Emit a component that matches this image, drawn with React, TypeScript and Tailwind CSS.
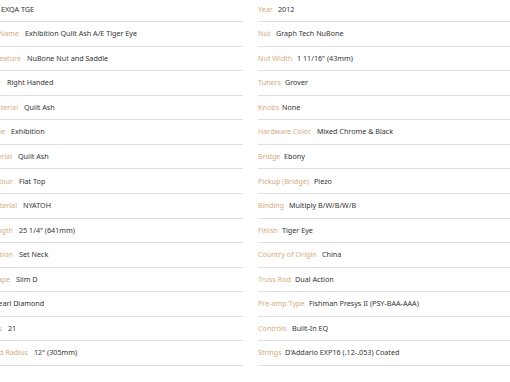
import React from "react";

type Row = { label: string; value: string; w: string };

const left: Row[] = [
  { label: "Model", value: "EXQA TGE", w: "w-[61px]" },
  { label: "Model Name", value: "Exhibition Quilt Ash A/E Tiger Eye", w: "w-[85px]" },
  { label: "Special Feature", value: "NuBone Nut and Saddle", w: "w-[87px]" },
  { label: "Player", value: "Right Handed", w: "w-[67px]" },
  { label: "Top Material", value: "Quilt Ash", w: "w-[84px]" },
  { label: "Body Shape", value: "Exhibition", w: "w-[71px]" },
  { label: "Back & Side Material", value: "Quilt Ash", w: "w-[78px]" },
  { label: "Body Contour", value: "Flat Top", w: "w-[79px]" },
  { label: "Neck Material", value: "NYATOH", w: "w-[83px]" },
  { label: "Scale Length", value: "25 1/4\" (641mm)", w: "w-[79px]" },
  { label: "Neck Construction", value: "Set Neck", w: "w-[79px]" },
  { label: "Neck Shape", value: "Slim D", w: "w-[76px]" },
  { label: "Inlay", value: "Pearl Diamond", w: "w-[54px]" },
  { label: "Frets", value: "21", w: "w-[68px]" },
  { label: "Fingerboard Radius", value: "12\" (305mm)", w: "w-[94px]" },
];

const right: Row[] = [
  { label: "Year", value: "2012", w: "w-[20px]" },
  { label: "Nut", value: "Graph Tech NuBone", w: "w-[18px]" },
  { label: "Nut Width", value: "1 11/16\" (43mm)", w: "w-[39px]" },
  { label: "Tuners", value: "Grover", w: "w-[27px]" },
  { label: "Knobs", value: "None", w: "w-[24px]" },
  { label: "Hardware Color", value: "Mixed Chrome & Black", w: "w-[59px]" },
  { label: "Bridge", value: "Ebony", w: "w-[26px]" },
  { label: "Pickup (Bridge)", value: "Piezo", w: "w-[56px]" },
  { label: "Binding", value: "Multiply B/W/B/W/B", w: "w-[31px]" },
  { label: "Finish", value: "Tiger Eye", w: "w-[24px]" },
  { label: "Country of Origin", value: "China", w: "w-[64px]" },
  { label: "Truss Rod", value: "Dual Action", w: "w-[37px]" },
  { label: "Pre-amp Type", value: "Fishman Presys II (PSY-BAA-AAA)", w: "w-[51px]" },
  { label: "Controls", value: "Built-In EQ", w: "w-[34px]" },
  { label: "Strings", value: "D'Addario EXP16 (.12-.053) Coated", w: "w-[27px]" },
];

function LeftRow({ r }: { r: Row }) {
  return (
    <div className="flex h-[24.57px] items-center border-b border-[#e0e0e0] whitespace-nowrap">
      <div className={`${r.w} shrink-0 flex justify-end pr-[6px] text-[#d6ab80]`}>
        <span>{r.label}</span>
      </div>
      <span className="text-[#333333]">{r.value}</span>
    </div>
  );
}

function RightRow({ r }: { r: Row }) {
  return (
    <div className="flex h-[24.57px] items-center border-b border-[#e0e0e0] whitespace-nowrap">
      <div className={`${r.w} shrink-0 text-[#d6ab80]`}>
        <span>{r.label}</span>
      </div>
      <span className="text-[#333333]">{r.value}</span>
    </div>
  );
}

export default function App() {
  return (
    <div className="w-[510px] h-[382px] overflow-hidden bg-white font-['Noto_Sans',sans-serif] text-[7.2px] leading-none">
      <div className="flex gap-[15px] -ml-[60px] -mt-[2.57px]">
        <div className="w-[303px] shrink-0 flex flex-col">
          {left.map((r) => (
            <LeftRow key={r.label} r={r} />
          ))}
        </div>
        <div className="w-[300px] shrink-0 flex flex-col">
          {right.map((r) => (
            <RightRow key={r.label} r={r} />
          ))}
        </div>
      </div>
    </div>
  );
}
